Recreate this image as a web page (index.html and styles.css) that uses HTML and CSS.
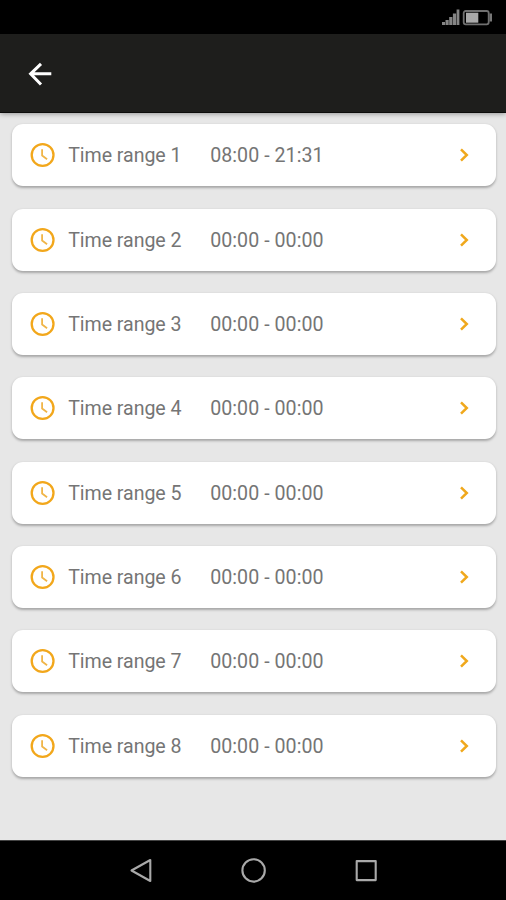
FILE: index.html
```html
<!DOCTYPE html>
<html lang="en">
<head>
<meta charset="utf-8">
<title>Time ranges</title>
<link rel="stylesheet" href="styles.css">
</head>
<body>
<svg class="symbols" width="0" height="0">
  <symbol id="clock" viewBox="0 0 26 26"><circle cx="12.6" cy="13" r="10.9" fill="none" stroke="#f2a71b" stroke-width="2.3"/><path d="M12.1 7.2v6.4l5 3.6" fill="none" stroke="#f0b548" stroke-width="1.8"/></symbol>
  <symbol id="chevron" viewBox="0 0 12 16"><path d="M2 2.3 7.8 8 2 13.7" fill="none" stroke="#f0a81c" stroke-width="2.5"/></symbol>
</svg>
<div class="screen">
  <div class="status">
    <svg width="52" height="18" viewBox="0 0 52 18">
      <path d="M2 14h3v3H2zM5.5 12h3.2v5H5.500zM9.200 9h3.200v8H9.200zM12.900 5.500h3.200V17h-3.200zM16.600 1.500h2.800V17h-2.800z" fill="#858585"/>
      <rect x="23.7" y="3" width="25" height="13.3" rx="2" fill="none" stroke="#707070" stroke-width="1.8"/>
      <path d="M26 4.700h12.300v10H26z" fill="#aaa"/>
      <path d="M49.500 5.500h3v8h-3z" fill="#777"/>
    </svg>
  </div>
  <header class="bar">
    <svg width="26" height="26" viewBox="0 0 26 26"><path d="M25.300 12.800H4M15 2.800 4.600 12.800 15 23.500" fill="none" stroke="#fff" stroke-width="3"/></svg>
  </header>
  <main class="list">
    <div class="card"><svg class="clock"><use href="#clock"/></svg><span class="name">Time range 1</span><span class="time">08:00 - 21:31</span><svg class="chevron"><use href="#chevron"/></svg></div>
    <div class="card"><svg class="clock"><use href="#clock"/></svg><span class="name">Time range 2</span><span class="time">00:00 - 00:00</span><svg class="chevron"><use href="#chevron"/></svg></div>
    <div class="card"><svg class="clock"><use href="#clock"/></svg><span class="name">Time range 3</span><span class="time">00:00 - 00:00</span><svg class="chevron"><use href="#chevron"/></svg></div>
    <div class="card"><svg class="clock"><use href="#clock"/></svg><span class="name">Time range 4</span><span class="time">00:00 - 00:00</span><svg class="chevron"><use href="#chevron"/></svg></div>
    <div class="card"><svg class="clock"><use href="#clock"/></svg><span class="name">Time range 5</span><span class="time">00:00 - 00:00</span><svg class="chevron"><use href="#chevron"/></svg></div>
    <div class="card"><svg class="clock"><use href="#clock"/></svg><span class="name">Time range 6</span><span class="time">00:00 - 00:00</span><svg class="chevron"><use href="#chevron"/></svg></div>
    <div class="card"><svg class="clock"><use href="#clock"/></svg><span class="name">Time range 7</span><span class="time">00:00 - 00:00</span><svg class="chevron"><use href="#chevron"/></svg></div>
    <div class="card"><svg class="clock"><use href="#clock"/></svg><span class="name">Time range 8</span><span class="time">00:00 - 00:00</span><svg class="chevron"><use href="#chevron"/></svg></div>
  </main>
  <nav class="nav">
    <svg width="26" height="26" viewBox="0 0 26 26"><path d="M22.300 2v21L3.500 12.500z"/></svg>
    <svg width="26" height="26" viewBox="0 0 26 26"><circle cx="13.6" cy="12.4" r="11.2"/></svg>
    <svg width="26" height="26" viewBox="0 0 26 26"><path d="M3.700 3.100h19v19h-19z"/></svg>
  </nav>
</div>
</body>
</html>
```

FILE: styles.css
```css
body {
  margin: 0;
  font-family: Roboto, sans-serif;
}

.symbols {
  display: none;
}

.screen {
  display: flex;
  flex-direction: column;
  height: 900px;
  background: #e7e7e7;
}

.status {
  display: flex;
  flex: none;
  justify-content: flex-end;
  box-sizing: border-box;
  height: 34px;
  padding: 8px 14px 0 0;
  background: #000;
}

.bar {
  display: flex;
  flex: none;
  align-items: center;
  box-sizing: border-box;
  height: 79px;
  padding: 2px 0 0 26px;
  background: #1e1e1c;
  border-bottom: 1px solid #0c0c0b;
  box-shadow: 0 1px 5px rgba(0, 0, 0, 0.35);
}

.list {
  display: flex;
  flex: 1;
  flex-direction: column;
  gap: 22.35px;
  padding: 11.4px 10.5px 0 11.5px;
}

.card {
  display: flex;
  align-items: center;
  flex: none;
  box-sizing: border-box;
  height: 62px;
  padding: 0 24.5px 0 18.5px;
  border-radius: 11px;
  background: #fff;
  box-shadow: 0 1.5px 2.5px rgba(0, 0, 0, 0.28);
  color: #757575;
  font-size: 19.6px;
  line-height: 24px;
  white-space: nowrap;
}

.clock {
  width: 26px;
  height: 26px;
}

.name,
.time {
  padding-top: 2px;
}

.name {
  width: 142px;
  margin-left: 12.2px;
  letter-spacing: -0.05px;
}

.time {
  letter-spacing: 0.05px;
}

.chevron {
  width: 12px;
  height: 16px;
  margin-left: auto;
}

.nav {
  display: flex;
  flex: none;
  align-items: center;
  justify-content: center;
  gap: 86.5px;
  box-sizing: border-box;
  height: 60px;
  border-top: 1px solid #444;
  background: #000;
}

.nav svg {
  fill: none;
  stroke: #a9a9a9;
  stroke-width: 2.1;
  stroke-linejoin: round;
}
```
